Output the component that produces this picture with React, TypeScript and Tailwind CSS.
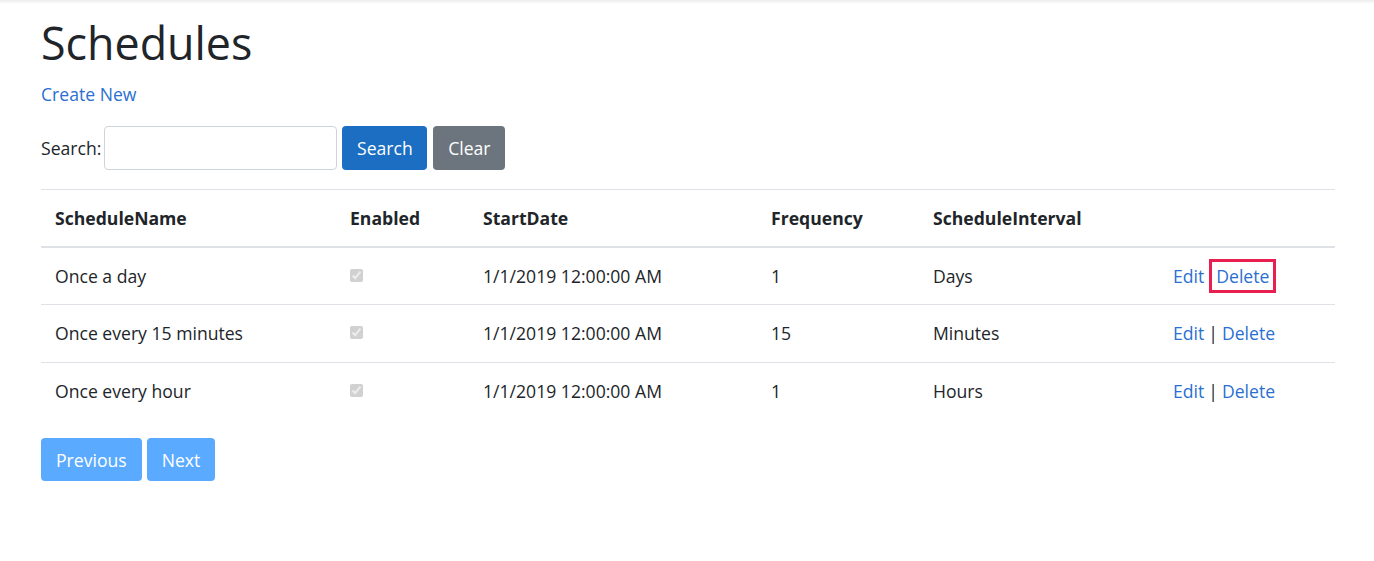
import React from 'react';

const rows = [
  { name: 'Once a day', start: '1/1/2019 12:00:00 AM', freq: '1', interval: 'Days', boxed: true },
  { name: 'Once every 15 minutes', start: '1/1/2019 12:00:00 AM', freq: '15', interval: 'Minutes', boxed: false },
  { name: 'Once every hour', start: '1/1/2019 12:00:00 AM', freq: '1', interval: 'Hours', boxed: false },
];

export default function App() {
  return (
    <div className="min-h-[561px] bg-white text-[#212529] text-[17.6px] font-['Open_Sans',sans-serif]">
      <div className="h-[4px] bg-gradient-to-b from-[#ececec] to-white" />
      <div className="px-[41px] pr-[39px]">
        <h1 className="text-[44.8px] leading-[1.2] mt-[12px] mb-[12px]">Schedules</h1>
        <a href="#" className="text-[#2a6fd1] leading-[24px] block">Create New</a>

        <form className="flex items-center mt-[20px] mb-[19px]" onSubmit={(e) => e.preventDefault()}>
          <label className="mr-[3px]">Search:</label>
          <input className="w-[233px] h-[44px] border border-[#ced4da] rounded-[4px] px-3" />
          <button className="ml-[5px] h-[44px] w-[85px] rounded-[4px] bg-[#1b6ec2] text-white">Search</button>
          <button className="ml-[6px] h-[44px] w-[72px] rounded-[4px] bg-[#6c757d] text-white">Clear</button>
        </form>

        <table className="w-full border-collapse">
          <thead>
            <tr className="border-t border-[#dee2e6] border-b-2 h-[58px]">
              <th className="text-left font-bold px-[14px] w-[295px]">ScheduleName</th>
              <th className="text-left font-bold px-[14px] w-[133px]">Enabled</th>
              <th className="text-left font-bold px-[14px] w-[288px]">StartDate</th>
              <th className="text-left font-bold px-[14px] w-[162px]">Frequency</th>
              <th className="text-left font-bold px-[14px] w-[240px]">ScheduleInterval</th>
              <th className="px-[14px]"></th>
            </tr>
          </thead>
          <tbody>
            {rows.map((r) => (
              <tr key={r.name} className="border-b border-[#dee2e6] h-[57.4px] last:border-b-0">
                <td className="px-[14px]">{r.name}</td>
                <td className="px-[14px]">
                  <input type="checkbox" checked disabled readOnly className="w-[13px] h-[13px] align-middle relative top-[-3px]" />
                </td>
                <td className="px-[14px]">{r.start}</td>
                <td className="px-[14px]">{r.freq}</td>
                <td className="px-[14px]">{r.interval}</td>
                <td className="px-[14px] whitespace-nowrap">
                  <a href="#" className="text-[#2a6fd1]">Edit</a>
                  {r.boxed ? (
                    <span className="ml-[5px] inline-block border-[3px] border-[#e8204f] px-[4px] leading-[28px]">
                      <a href="#" className="text-[#2a6fd1]">Delete</a>
                    </span>
                  ) : (
                    <>
                      <span className="mx-[4px]">|</span>
                      <a href="#" className="text-[#2a6fd1]">Delete</a>
                    </>
                  )}
                </td>
              </tr>
            ))}
          </tbody>
        </table>

        <div className="flex mt-[19px] gap-[5px]">
          <button disabled className="h-[43px] px-[15px] rounded-[4px] bg-[#5aabff] text-white">Previous</button>
          <button disabled className="h-[43px] px-[15px] rounded-[4px] bg-[#5aabff] text-white">Next</button>
        </div>
      </div>
    </div>
  );
}
